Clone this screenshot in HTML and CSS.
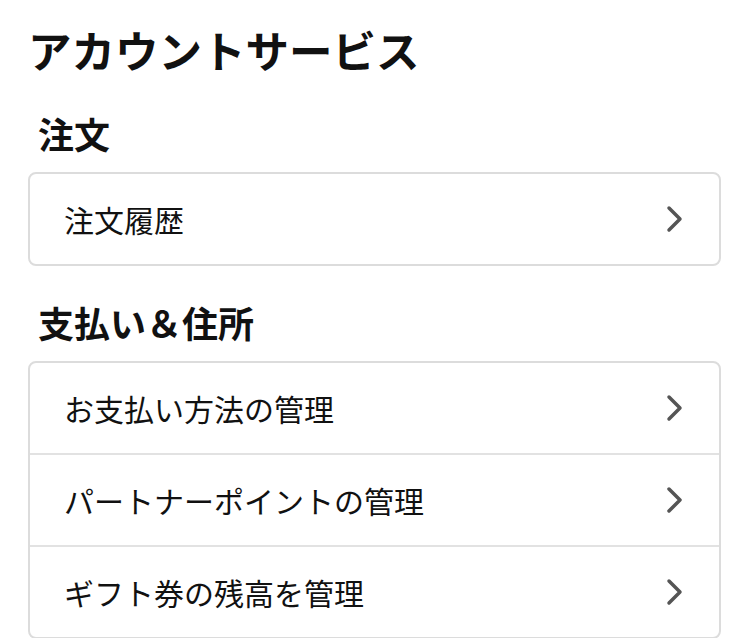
FILE: index.html
```html
<!DOCTYPE html>
<html lang="ja">
<head>
    <meta charset="UTF-8">
    <meta name="viewport" content="width=device-width, initial-scale=1.0">
    <title>アカウントサービス</title>
    <link rel="stylesheet" href="styles.css">
</head>
<body>
    <h1 class="page-title">アカウントサービス</h1>

    <h2 class="section-title">注文</h2>
    <div class="card">
        <a class="row" href="#">
            <span>注文履歴</span>
            <svg class="chevron" viewBox="0 0 20 28"><polyline points="4,3 15,14 4,25"/></svg>
        </a>
    </div>

    <h2 class="section-title">支払い＆住所</h2>
    <div class="card">
        <a class="row" href="#">
            <span>お支払い方法の管理</span>
            <svg class="chevron" viewBox="0 0 20 28"><polyline points="4,3 15,14 4,25"/></svg>
        </a>
        <a class="row" href="#">
            <span>パートナーポイントの管理</span>
            <svg class="chevron" viewBox="0 0 20 28"><polyline points="4,3 15,14 4,25"/></svg>
        </a>
        <a class="row" href="#">
            <span>ギフト券の残高を管理</span>
            <svg class="chevron" viewBox="0 0 20 28"><polyline points="4,3 15,14 4,25"/></svg>
        </a>
    </div>
</body>
</html>
```
FILE: styles.css
```css
body {
    font-family: "Noto Sans CJK JP", "Noto Sans", sans-serif;
    color: #111;
    background-color: #fff;
    margin: 0;
    padding: 23px 29px 0 28px;
}
.page-title {
    font-size: 43.5px;
    font-weight: bold;
    line-height: 53px;
    margin: 0 0 36px 0;
}
.section-title {
    font-size: 36px;
    font-weight: bold;
    line-height: 43px;
    margin: 0 0 17px 10px;
}
.card {
    border: 2px solid #dcdcdc;
    border-radius: 8px;
    margin-bottom: 35px;
    overflow: hidden;
}
.row {
    display: flex;
    align-items: center;
    justify-content: space-between;
    height: 90px;
    padding: 0 34px 0 34px;
    color: #111;
    text-decoration: none;
    font-size: 30px;
    border-bottom: 2px solid #e2e2e2;
}
.row:last-child {
    border-bottom: none;
}
.chevron {
    width: 20px;
    height: 28px;
}
.chevron polyline {
    fill: none;
    stroke: #555;
    stroke-width: 3.5;
    stroke-linecap: round;
    stroke-linejoin: round;
}
```
